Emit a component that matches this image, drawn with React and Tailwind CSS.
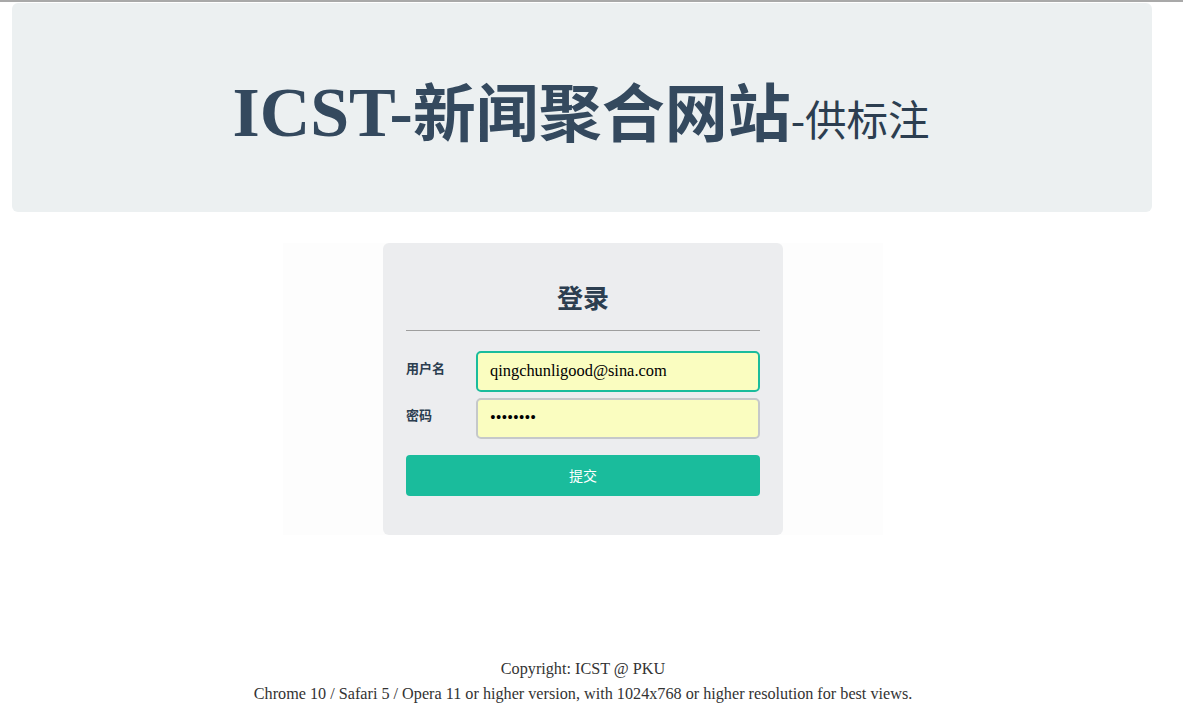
import React from "react";

const serif = "font-['Liberation_Serif','Noto_Sans_CJK_SC',serif]";
const cjk = "font-['Noto_Sans_CJK_SC','Noto_Sans',sans-serif]";

const Field = ({ label, value, focused }) => (
  <div className="flex items-center mb-[6px]">
    <label className={`w-[70px] text-[13px] font-bold text-[#2c3e50] -mt-[8px] ${cjk}`}>
      {label}
    </label>
    <div
      className={`flex-1 h-[41px] rounded-[5px] border-2 bg-[#fafdc0] flex items-center px-[12px] text-[16.4px] text-black ${serif} ${
        focused ? "border-[#1abc9c]" : "border-[#c5c8ca]"
      }`}
    >
      {value}
    </div>
  </div>
);

const App = () => {
  return (
    <div className="w-[1183px] h-[719px] bg-white border-t-2 border-[#a9a9a9] overflow-hidden">
      <div className="w-[1166px]">
        <div className="ml-[12px] mt-[1px] w-[1140px] h-[209px] rounded-[6px] bg-[#ecf0f1] flex items-center justify-center pt-[10px]">
          <h1 className="text-[#34495e] whitespace-nowrap leading-none -ml-[2px]">
            <span className={`text-[70px] font-bold ${serif}`}>ICST-</span>
            <span className={`text-[63px] font-bold ${cjk}`}>新闻聚合网站</span>
            <span className={`text-[41.5px] text-[#2c3e50] ${cjk}`}>-供标注</span>
          </h1>
        </div>

        <div className="mt-[31px] mx-auto w-[600px] bg-[#fdfdfd] flex justify-center">
          <div className="w-[400px] h-[292px] rounded-[6px] bg-[#ecedef] px-[23px] pt-[41px]">
            <h2 className={`text-center text-[26px] font-bold text-[#2c3e50] leading-none ${cjk}`}>
              登录
            </h2>
            <div className="mt-[20px] mb-[20px] h-px bg-[#9e9e9e]" />
            <Field label="用户名" value="qingchunligood@sina.com" focused />
            <Field label="密码" value="••••••••" />
            <button
              className={`mt-[10px] w-full h-[41px] rounded-[4px] bg-[#1abc9c] text-white text-[14px] ${cjk}`}
            >
              提交
            </button>
          </div>
        </div>

        <div className={`mt-[122px] text-center text-[16.2px] text-[#333] leading-[25px] ${serif}`}>
          <p>Copyright: ICST @ PKU</p>
          <p>Chrome 10 / Safari 5 / Opera 11 or higher version, with 1024x768 or higher resolution for best views.</p>
        </div>
      </div>
    </div>
  );
};

export default App;
